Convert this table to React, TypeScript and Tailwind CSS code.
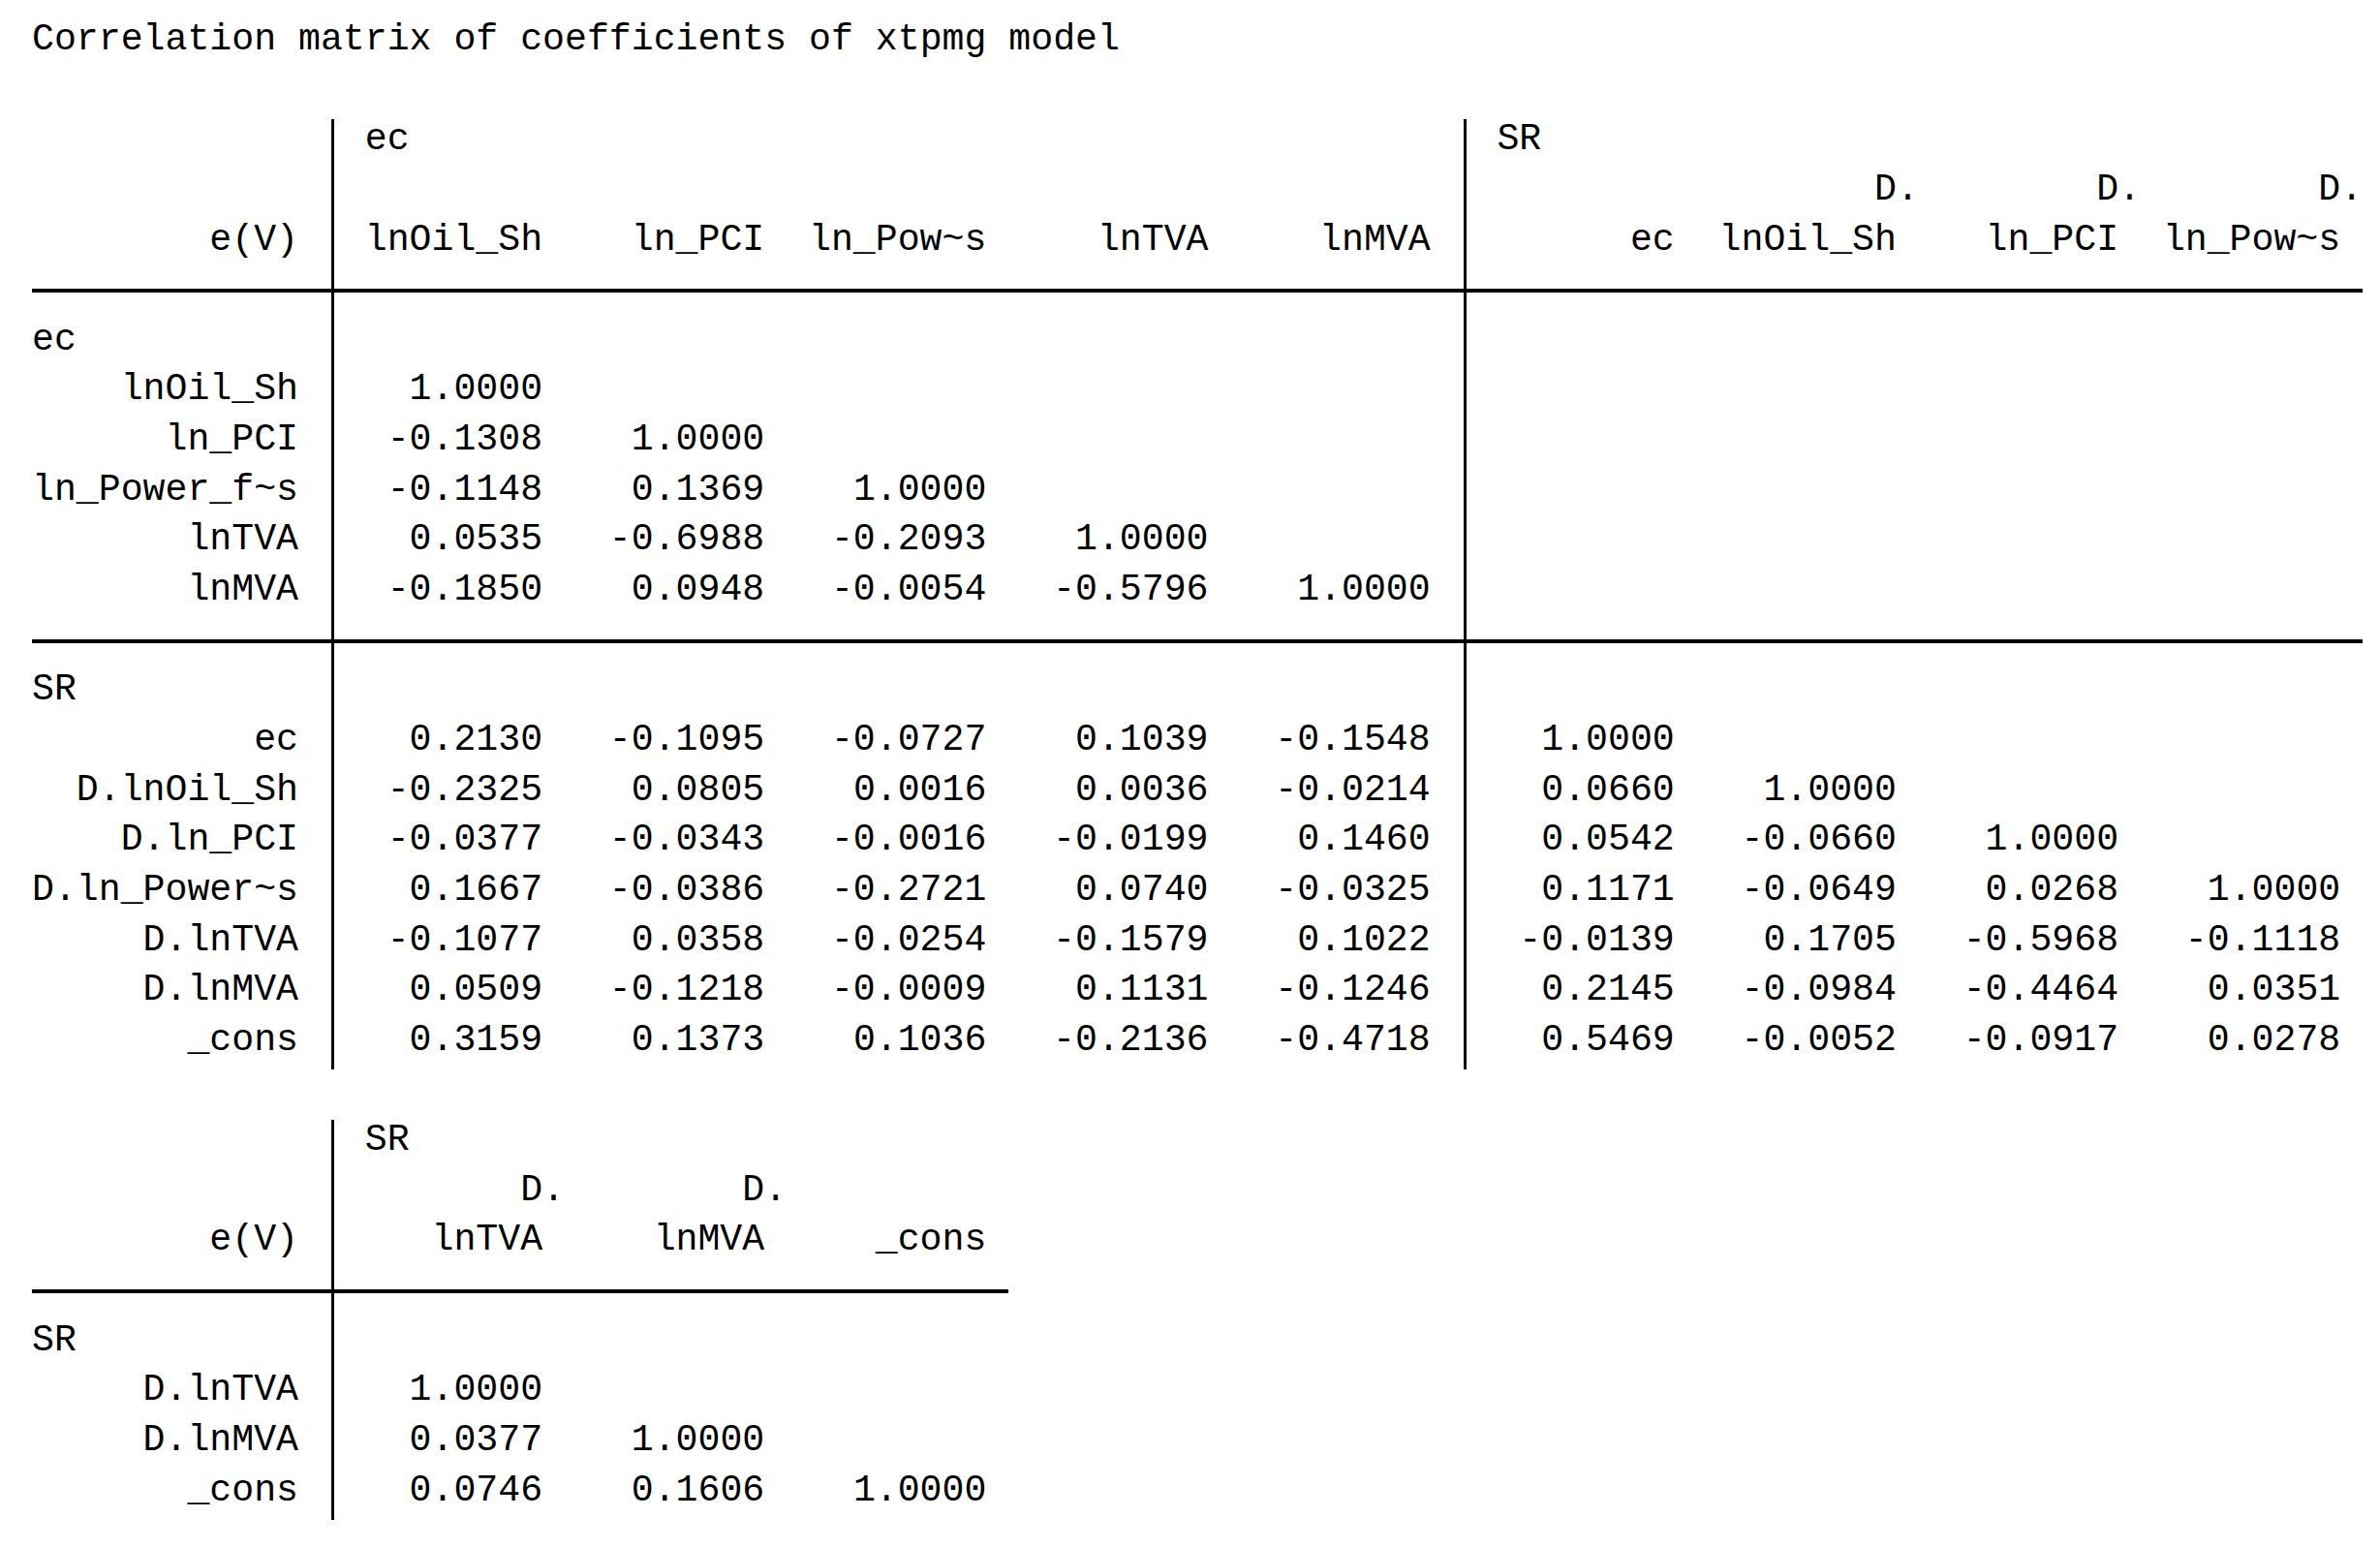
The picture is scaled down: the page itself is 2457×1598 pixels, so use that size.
import { ReactNode } from "react";

type Col = { op?: string; name: string };
type Grp = { eq: string; cols: Col[] };
type Row = { label: string; vals: string[][] };
type Section = { eq: string; rows: Row[] };

const TABLE_1_GROUPS: Grp[] = [
  {
    eq: "ec",
    cols: [
      { name: "lnOil_Sh" },
      { name: "ln_PCI" },
      { name: "ln_Pow~s" },
      { name: "lnTVA" },
      { name: "lnMVA" },
    ],
  },
  {
    eq: "SR",
    cols: [
      { name: "ec" },
      { op: "D.", name: "lnOil_Sh" },
      { op: "D.", name: "ln_PCI" },
      { op: "D.", name: "ln_Pow~s" },
    ],
  },
];

const TABLE_1_SECTIONS: Section[] = [
  {
    eq: "ec",
    rows: [
      { label: "lnOil_Sh", vals: [["1.0000"], []] },
      { label: "ln_PCI", vals: [["-0.1308", "1.0000"], []] },
      { label: "ln_Power_f~s", vals: [["-0.1148", "0.1369", "1.0000"], []] },
      { label: "lnTVA", vals: [["0.0535", "-0.6988", "-0.2093", "1.0000"], []] },
      { label: "lnMVA", vals: [["-0.1850", "0.0948", "-0.0054", "-0.5796", "1.0000"], []] },
    ],
  },
  {
    eq: "SR",
    rows: [
      {
        label: "ec",
        vals: [["0.2130", "-0.1095", "-0.0727", "0.1039", "-0.1548"], ["1.0000"]],
      },
      {
        label: "D.lnOil_Sh",
        vals: [["-0.2325", "0.0805", "0.0016", "0.0036", "-0.0214"], ["0.0660", "1.0000"]],
      },
      {
        label: "D.ln_PCI",
        vals: [
          ["-0.0377", "-0.0343", "-0.0016", "-0.0199", "0.1460"],
          ["0.0542", "-0.0660", "1.0000"],
        ],
      },
      {
        label: "D.ln_Power~s",
        vals: [
          ["0.1667", "-0.0386", "-0.2721", "0.0740", "-0.0325"],
          ["0.1171", "-0.0649", "0.0268", "1.0000"],
        ],
      },
      {
        label: "D.lnTVA",
        vals: [
          ["-0.1077", "0.0358", "-0.0254", "-0.1579", "0.1022"],
          ["-0.0139", "0.1705", "-0.5968", "-0.1118"],
        ],
      },
      {
        label: "D.lnMVA",
        vals: [
          ["0.0509", "-0.1218", "-0.0009", "0.1131", "-0.1246"],
          ["0.2145", "-0.0984", "-0.4464", "0.0351"],
        ],
      },
      {
        label: "_cons",
        vals: [
          ["0.3159", "0.1373", "0.1036", "-0.2136", "-0.4718"],
          ["0.5469", "-0.0052", "-0.0917", "0.0278"],
        ],
      },
    ],
  },
];

const TABLE_2_GROUPS: Grp[] = [
  {
    eq: "SR",
    cols: [{ op: "D.", name: "lnTVA" }, { op: "D.", name: "lnMVA" }, { name: "_cons" }],
  },
];

const TABLE_2_SECTIONS: Section[] = [
  {
    eq: "SR",
    rows: [
      { label: "D.lnTVA", vals: [["1.0000"]] },
      { label: "D.lnMVA", vals: [["0.0377", "1.0000"]] },
      { label: "_cons", vals: [["0.0746", "0.1606", "1.0000"]] },
    ],
  },
];

const HrFill = () => <div className="h-[calc(50%_-_2px)] border-b-4 border-black" />;

// text sits 5px above the middle of its line box, like the log's rules do
const Line = ({ children }: { children?: ReactNode }) => (
  <div className="flex h-[51.65px] items-stretch whitespace-pre leading-[41.65px]">{children}</div>
);

type CellKind = "text" | "eq" | "hr";

// one line of the table: label column, then each group behind its bar
const TableLine = ({
  groups,
  label,
  labelLeft,
  cells,
  kind = "text",
}: {
  groups: Grp[];
  label?: string;
  labelLeft?: boolean;
  cells: ReactNode[][];
  kind?: CellKind;
}) => (
  <Line>
    <div
      className={
        kind === "hr" || labelLeft
          ? "w-[13.5ch] shrink-0"
          : "w-[13.5ch] shrink-0 pr-[1.5ch] text-right"
      }
    >
      {kind === "hr" ? <HrFill /> : label}
    </div>
    {groups.map((g, gi) => {
      const last = gi === groups.length - 1;
      return (
        <div key={gi} className="flex">
          {g.cols.map((_, i) => (
            <div
              key={i}
              className={
                i === 0
                  ? kind === "eq"
                    ? "w-[9.5ch] shrink-0 border-l-[3px] border-black pl-[calc(1.5ch_-_3px)] text-left"
                    : "w-[9.5ch] shrink-0 border-l-[3px] border-black text-right"
                  : "w-[10ch] shrink-0 text-right"
              }
            >
              {kind === "hr" ? <HrFill /> : cells[gi]?.[i] ?? ""}
            </div>
          ))}
          <div className={last ? "w-[1ch] shrink-0" : "w-[1.5ch] shrink-0"}>
            {kind === "hr" ? <HrFill /> : null}
          </div>
        </div>
      );
    })}
  </Line>
);

const MatrixTable = ({ groups, sections }: { groups: Grp[]; sections: Section[] }) => (
  <div className="flex flex-col">
    <TableLine groups={groups} kind="eq" cells={groups.map((g) => [g.eq])} />
    <TableLine
      groups={groups}
      cells={groups.map((g) =>
        g.cols.map((c) => (c.op ? <span className="inline-block -mr-[1ch]">{c.op}</span> : ""))
      )}
    />
    <TableLine groups={groups} label="e(V)" cells={groups.map((g) => g.cols.map((c) => c.name))} />
    <TableLine groups={groups} kind="hr" cells={[]} />
    {sections.map((s, si) => (
      <div key={s.eq} className="flex flex-col">
        {si > 0 && <TableLine groups={groups} kind="hr" cells={[]} />}
        <TableLine groups={groups} label={s.eq} labelLeft cells={[]} />
        {s.rows.map((r) => (
          <TableLine key={r.label} groups={groups} label={r.label} cells={r.vals} />
        ))}
      </div>
    ))}
  </div>
);

export default function App() {
  return (
    <div className="min-h-screen bg-white pl-[33px] pt-[20px] font-['Liberation_Mono','Courier_New',monospace] text-[38.2px] text-black">
      <Line>Correlation matrix of coefficients of xtpmg model</Line>
      <Line />
      <MatrixTable groups={TABLE_1_GROUPS} sections={TABLE_1_SECTIONS} />
      <Line />
      <MatrixTable groups={TABLE_2_GROUPS} sections={TABLE_2_SECTIONS} />
    </div>
  );
}
